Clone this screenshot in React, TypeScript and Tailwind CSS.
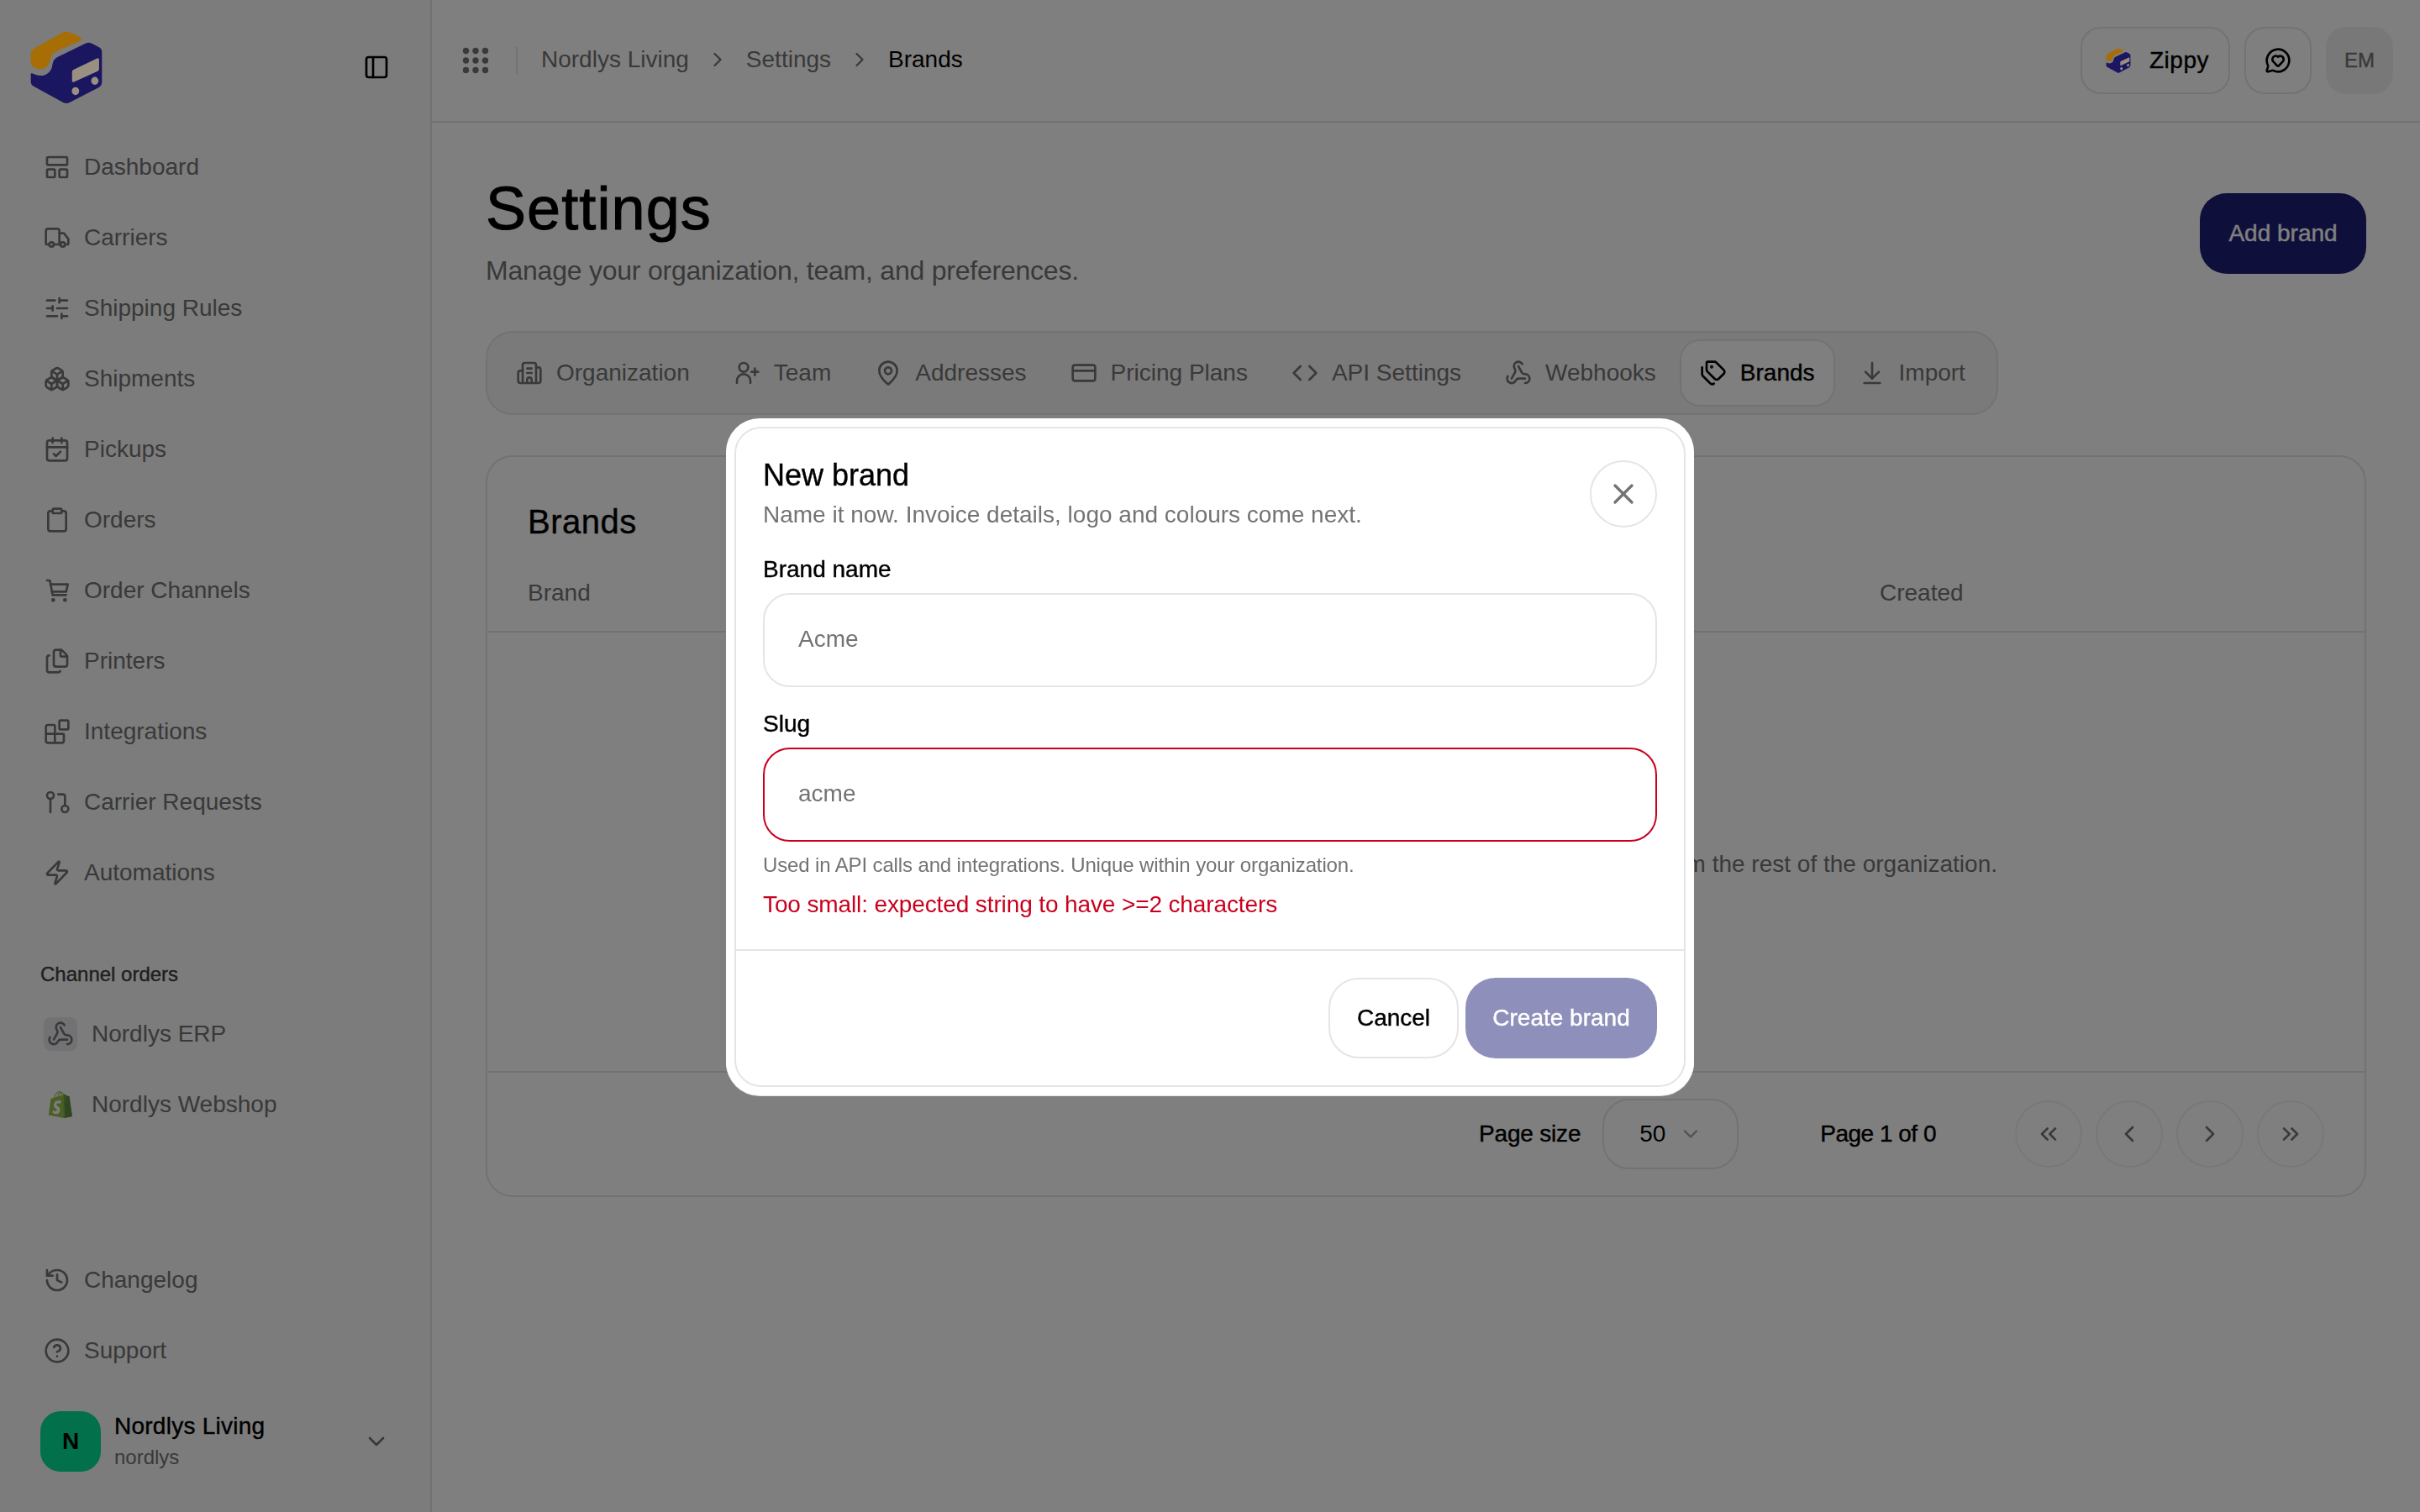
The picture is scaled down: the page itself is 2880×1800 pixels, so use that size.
import {
  Blocks,
  Boxes,
  Building2,
  CalendarCheck,
  ChevronDown,
  ChevronLeft,
  ChevronRight,
  ChevronsLeft,
  ChevronsRight,
  CircleHelp,
  Clipboard,
  Code,
  CreditCard,
  ArrowDownToLine,
  Files,
  History,
  LayoutPanelTop,
  MapPin,
  MessageCircleHeart,
  PanelLeft,
  SlidersHorizontal,
  Tags,
  Truck,
  Webhook,
  X,
  Zap,
} from "lucide-react";
import { SiShopify } from "react-icons/si";

const medium = "[-webkit-text-stroke:0.4px]";

// sits above the backdrop, the reference logo is not dimmed as much as the page
function Logo({ className }: { className: string }) {
  return (
    <svg viewBox="50 48 260 260" className={`relative z-10 ${className}`}>
      <path
        fill="#a66e04"
        d="M70 110 L165 57 Q180 50 195 57 L228 72 Q240 80 228 86 L145 122 Q130 130 125 145 Q118 180 95 185 Q80 188 62 175 Q55 170 55 160 L55 130 Q55 117 70 110 Z"
      />
      <path
        fill="#1a1760"
        d="M55 200 Q60 198 65 202 Q85 212 105 205 Q128 198 132 165 Q134 150 150 142 L250 93 Q258 90 268 94 L295 108 Q305 114 305 125 L305 230 Q305 243 293 250 L190 303 Q180 307 170 303 L65 245 Q55 240 55 228 Z"
      />
      <path
        fill="#9a9082"
        d="M205 187 L288 147 Q295 145 295 152 L295 185 Q295 190 290 192 L207 230 Q200 232 200 226 L200 195 Q200 189 205 187 Z"
      />
      <ellipse cx="212" cy="262" rx="13" ry="14" fill="#9a9082" />
      <ellipse cx="280" cy="226" rx="13" ry="14" fill="#9a9082" />
    </svg>
  );
}

function LineIcon({ className, children }: { className?: string; children: React.ReactNode }) {
  return (
    <svg
      viewBox="0 0 24 24"
      fill="none"
      stroke="currentColor"
      strokeWidth="2"
      strokeLinecap="round"
      strokeLinejoin="round"
      className={className}
    >
      {children}
    </svg>
  );
}

function RequestIcon({ className }: { className?: string }) {
  return (
    <LineIcon className={className}>
      <circle cx="6" cy="6" r="3" />
      <path d="M6 9v12" />
      <path d="M13 5h4a2 2 0 0 1 2 2v8" />
      <circle cx="19" cy="18" r="3" />
    </LineIcon>
  );
}

function CartIcon({ className }: { className?: string }) {
  return (
    <LineIcon className={className}>
      <path d="M3 3h2.5L8 16h12" />
      <path d="M6 6.5h15.5L20 13H7.3" />
      <circle cx="8.5" cy="20.5" r="0.8" />
      <circle cx="19" cy="20.5" r="0.8" />
    </LineIcon>
  );
}

function TeamIcon({ className }: { className?: string }) {
  return (
    <LineIcon className={className}>
      <circle cx="9" cy="7" r="4" />
      <path d="M3 21v-2a6 6 0 0 1 12 0v2" />
      <path d="M19 8v6" />
      <path d="M22 11h-6" />
    </LineIcon>
  );
}

function GripIcon() {
  return (
    <svg viewBox="0 0 32 32" className="h-[32px] w-[32px] text-[#737373]" fill="currentColor">
      {[4.5, 16, 27.5].map((y) =>
        [4.5, 16, 27.5].map((x) => <circle key={`${x}-${y}`} cx={x} cy={y} r="3.7" />),
      )}
    </svg>
  );
}

const navItems = [
  { label: "Dashboard", icon: LayoutPanelTop },
  { label: "Carriers", icon: Truck },
  { label: "Shipping Rules", icon: SlidersHorizontal },
  { label: "Shipments", icon: Boxes },
  { label: "Pickups", icon: CalendarCheck },
  { label: "Orders", icon: Clipboard },
  { label: "Order Channels", icon: CartIcon },
  { label: "Printers", icon: Files },
  { label: "Integrations", icon: Blocks },
  { label: "Carrier Requests", icon: RequestIcon },
  { label: "Automations", icon: Zap },
];

const tabs = [
  { label: "Organization", icon: Building2 },
  { label: "Team", icon: TeamIcon },
  { label: "Addresses", icon: MapPin },
  { label: "Pricing Plans", icon: CreditCard },
  { label: "API Settings", icon: Code },
  { label: "Webhooks", icon: Webhook },
  { label: "Brands", icon: Tags, active: true },
  { label: "Import", icon: ArrowDownToLine },
];

function NavRow({ label, icon: Icon }: { label: string; icon: React.ElementType }) {
  return (
    <div className="flex h-[84px] items-center gap-[16px] pl-[52px] text-[28px] text-[#737373]">
      <Icon className="h-[32px] w-[32px] shrink-0" />
      <span>{label}</span>
    </div>
  );
}

function Sidebar() {
  return (
    <aside className="flex h-full w-[514px] shrink-0 flex-col border-r-2 border-[#e5e5e5] bg-[#f8f8f8]">
      <div className="flex h-[157px] shrink-0 items-center justify-between pl-[35px] pr-[48px] pt-[3px]">
        <Logo className="h-[88px] w-[88px]" />
        <PanelLeft className="h-[32px] w-[32px] text-black" />
      </div>
      <nav>
        {navItems.map((item) => (
          <NavRow key={item.label} label={item.label} icon={item.icon} />
        ))}
      </nav>
      <div className={`mt-[63px] pl-[48px] text-[24px] leading-[32px] text-[#404040] ${medium}`}>
        Channel orders
      </div>
      <div className="mt-[13px]">
        <div className="flex h-[84px] items-center gap-[17px] pl-[52px] text-[28px] text-[#737373]">
          <span className="flex h-[40px] w-[40px] items-center justify-center rounded-[8px] bg-[#e4e4e8]">
            <Webhook className="h-[32px] w-[32px]" />
          </span>
          <span>Nordlys ERP</span>
        </div>
        <div className="flex h-[84px] items-center gap-[17px] pl-[52px] text-[28px] text-[#737373]">
          <span className="relative flex h-[40px] w-[40px] items-center justify-center">
            <SiShopify className="h-[32px] w-[32px] text-[#95bf47]" />
            <SiShopify className="absolute h-[32px] w-[32px] text-[#5e8e3e] [clip-path:inset(0_0_0_62%)]" />
          </span>
          <span>Nordlys Webshop</span>
        </div>
      </div>
      <div className="mt-auto">
        <NavRow label="Changelog" icon={History} />
        <NavRow label="Support" icon={CircleHelp} />
      </div>
      <div className="mb-[48px] mt-[30px] flex h-[72px] items-center pl-[48px] pr-[48px]">
        <div className="flex h-[72px] w-[72px] items-center justify-center rounded-[24px] bg-[#06e098] text-[28px] font-bold text-black">
          N
        </div>
        <div className="ml-[16px] mt-[1px] flex-1">
          <div className={`text-[28px] leading-[36px] tracking-[0.25px] text-black ${medium}`}>Nordlys Living</div>
          <div className="text-[24px] leading-[38px] text-[#737373]">nordlys</div>
        </div>
        <ChevronDown className="h-[32px] w-[32px] text-[#737373]" />
      </div>
    </aside>
  );
}

function TopBar() {
  return (
    <header className="flex h-[146px] shrink-0 items-center border-b-2 border-[#e5e5e5] pl-[36px] pr-[32px]">
      <GripIcon />
      <div className="ml-[32px] h-[32px] w-[2px] bg-[#e5e5e5]" />
      <div className="ml-[28px] flex items-center gap-[20px] pb-[2px] text-[28px] text-[#737373]">
        <span>Nordlys Living</span>
        <ChevronRight className="h-[28px] w-[28px]" />
        <span>Settings</span>
        <ChevronRight className="h-[28px] w-[28px]" />
        <span className="text-black">Brands</span>
      </div>
      <div className="ml-auto flex items-center gap-[17px]">
        <div className="flex h-[80px] w-[178px] items-center gap-[22px] rounded-[24px] border-2 border-[#e5e5e5] pl-[28px] text-[28px] text-black">
          <Logo className="h-[30px] w-[30px]" />
          <span className={`tracking-[0.5px] ${medium}`}>Zippy</span>
        </div>
        <div className="flex h-[80px] w-[80px] items-center justify-center rounded-[24px] border-2 border-[#e5e5e5] text-black">
          <MessageCircleHeart className="h-[32px] w-[32px]" />
        </div>
        <div className={`flex h-[80px] w-[80px] items-center justify-center rounded-[24px] bg-[#f0f0f0] text-[24px] text-[#737373] ${medium}`}>
          EM
        </div>
      </div>
    </header>
  );
}

function BrandsCard() {
  return (
    <section className="mt-[48px] flex h-[883px] flex-col rounded-[32px] border-2 border-[#e5e5e5]">
      <h2 className={`mt-[49px] px-[48px] text-[40px] leading-[56px] tracking-[0.5px] text-black ${medium}`}>Brands</h2>
      <div className="mt-[12px] flex h-[92px] shrink-0 items-center border-b-2 border-[#e5e5e5] px-[48px] text-[28px] text-[#737373]">
        <span className="w-[1609px]">Brand</span>
        <span>Created</span>
      </div>
      <div className="flex flex-1 justify-end pr-[437px] pt-[256px] text-[28px] leading-[40px] text-[#737373]">
        Invoices stay separate from the rest of the organization.
      </div>
      <div className="flex h-[148px] shrink-0 items-center justify-end border-t-2 border-[#e5e5e5] pr-[48px] text-[28px] text-black">
        <span className={`tracking-[-0.2px] ${medium}`}>Page size</span>
        <div className="ml-[26px] flex h-[84px] w-[162px] items-center gap-[16px] rounded-[32px] border-2 border-[#e5e5e5] pl-[42px]">
          <span>50</span>
          <ChevronDown className="h-[28px] w-[28px] text-[#a3a3a3]" />
        </div>
        <span className={`ml-[97px] tracking-[-0.5px] ${medium}`}>Page 1 of 0</span>
        <div className="ml-[94px] flex gap-[16px] text-[#737373]">
          {[ChevronsLeft, ChevronLeft, ChevronRight, ChevronsRight].map((Icon, i) => (
            <div key={i} className="flex h-[80px] w-[80px] items-center justify-center rounded-full border-2 border-[#f0f0f0]">
              <Icon className="h-[32px] w-[32px]" />
            </div>
          ))}
        </div>
      </div>
    </section>
  );
}

function NewBrandModal() {
  return (
    <div className="fixed inset-0 flex items-center justify-center bg-black/50 pt-[2px]">
      <div className="w-[1152px] rounded-[40px] bg-white p-[10px] shadow-[0_1px_0_#e5e5e5]">
        <div className="relative rounded-[32px] border-2 border-[#e5e5e5]">
          <button
            type="button"
            className="absolute right-[32px] top-[38px] flex h-[80px] w-[80px] items-center justify-center rounded-full border-2 border-[#e5e5e5] text-[#737373]"
          >
            <X className="h-[40px] w-[40px]" />
          </button>
          <div className="px-[32px] pt-[32px]">
            <div className={`text-[36px] leading-[48px] text-black ${medium}`}>New brand</div>
            <div className="mt-[3px] text-[28px] leading-[40px] text-[#737373]">
              Name it now. Invoice details, logo and colours come next.
            </div>
            <label className={`mt-[27px] block text-[28px] leading-[36px] text-black ${medium}`}>Brand name</label>
            <input
              placeholder="Acme"
              className="mt-[10px] block h-[112px] w-full rounded-[32px] border-2 border-[#e5e5e5] px-[40px] pb-[2px] text-[28px] outline-none placeholder:text-[#737373]"
            />
            <label className={`mt-[26px] block text-[28px] leading-[36px] text-black ${medium}`}>Slug</label>
            <input
              placeholder="acme"
              className="mt-[10px] block h-[112px] w-full rounded-[32px] border-2 border-[#c8001e] px-[40px] pb-[2px] text-[28px] outline-none placeholder:text-[#737373]"
            />
            <div className="mt-[12px] text-[24px] leading-[32px] tracking-[-0.13px] text-[#737373]">
              Used in API calls and integrations. Unique within your organization.
            </div>
            <div className="mt-[13px] text-[28px] leading-[36px] tracking-[-0.12px] text-[#c8001e]">
              Too small: expected string to have &gt;=2 characters
            </div>
          </div>
          <div className="mt-[35px] flex justify-end gap-[8px] border-t-2 border-[#e5e5e5] p-[32px] text-[28px]">
            <button type="button" className={`h-[96px] w-[155px] rounded-[36px] border-2 border-[#e5e5e5] text-black ${medium}`}>
              Cancel
            </button>
            <button type="button" className={`h-[96px] w-[228px] rounded-[36px] bg-[#8f8fbb] text-white ${medium}`}>
              Create brand
            </button>
          </div>
        </div>
      </div>
    </div>
  );
}

export default function App() {
  return (
    <div className="flex h-screen w-full overflow-hidden bg-white font-['Liberation_Sans',sans-serif]">
      <Sidebar />
      <main className="flex min-w-0 flex-1 flex-col">
        <TopBar />
        <div className="px-[64px]">
          <div className="flex items-start justify-between pt-[62px]">
            <div>
              <h1 className="text-[72px] leading-[80px] tracking-[1.1px] text-black [-webkit-text-stroke:1px]">Settings</h1>
              <p className="mt-[10px] text-[32px] leading-[48px] tracking-[-0.23px] text-[#737373]">
                Manage your organization, team, and preferences.
              </p>
            </div>
            <button type="button" className={`mt-[22px] h-[96px] w-[198px] rounded-[32px] bg-[#1f1f77] text-[28px] text-white ${medium}`}>
              Add brand
            </button>
          </div>
          <div className="mt-[48px] flex h-[100px] w-[1800px] items-center gap-[4px] rounded-[32px] border-2 border-[#e5e5e5] bg-[#f5f5f5] pl-[10px] pr-[8px]">
            {tabs.map((tab) => (
              <div
                key={tab.label}
                className={
                  tab.active
                    ? "flex h-[80px] items-center gap-[16px] whitespace-nowrap rounded-[24px] border-2 border-[#e5e5e5] bg-white px-[22px] text-[28px] text-black"
                    : "flex h-[80px] items-center gap-[16px] whitespace-nowrap rounded-[24px] border-2 border-transparent px-[22px] text-[28px] text-[#737373]"
                }
              >
                <tab.icon className="h-[32px] w-[32px] shrink-0" />
                <span className={tab.active ? medium : ""}>{tab.label}</span>
              </div>
            ))}
          </div>
          <BrandsCard />
        </div>
      </main>
      <NewBrandModal />
    </div>
  );
}
